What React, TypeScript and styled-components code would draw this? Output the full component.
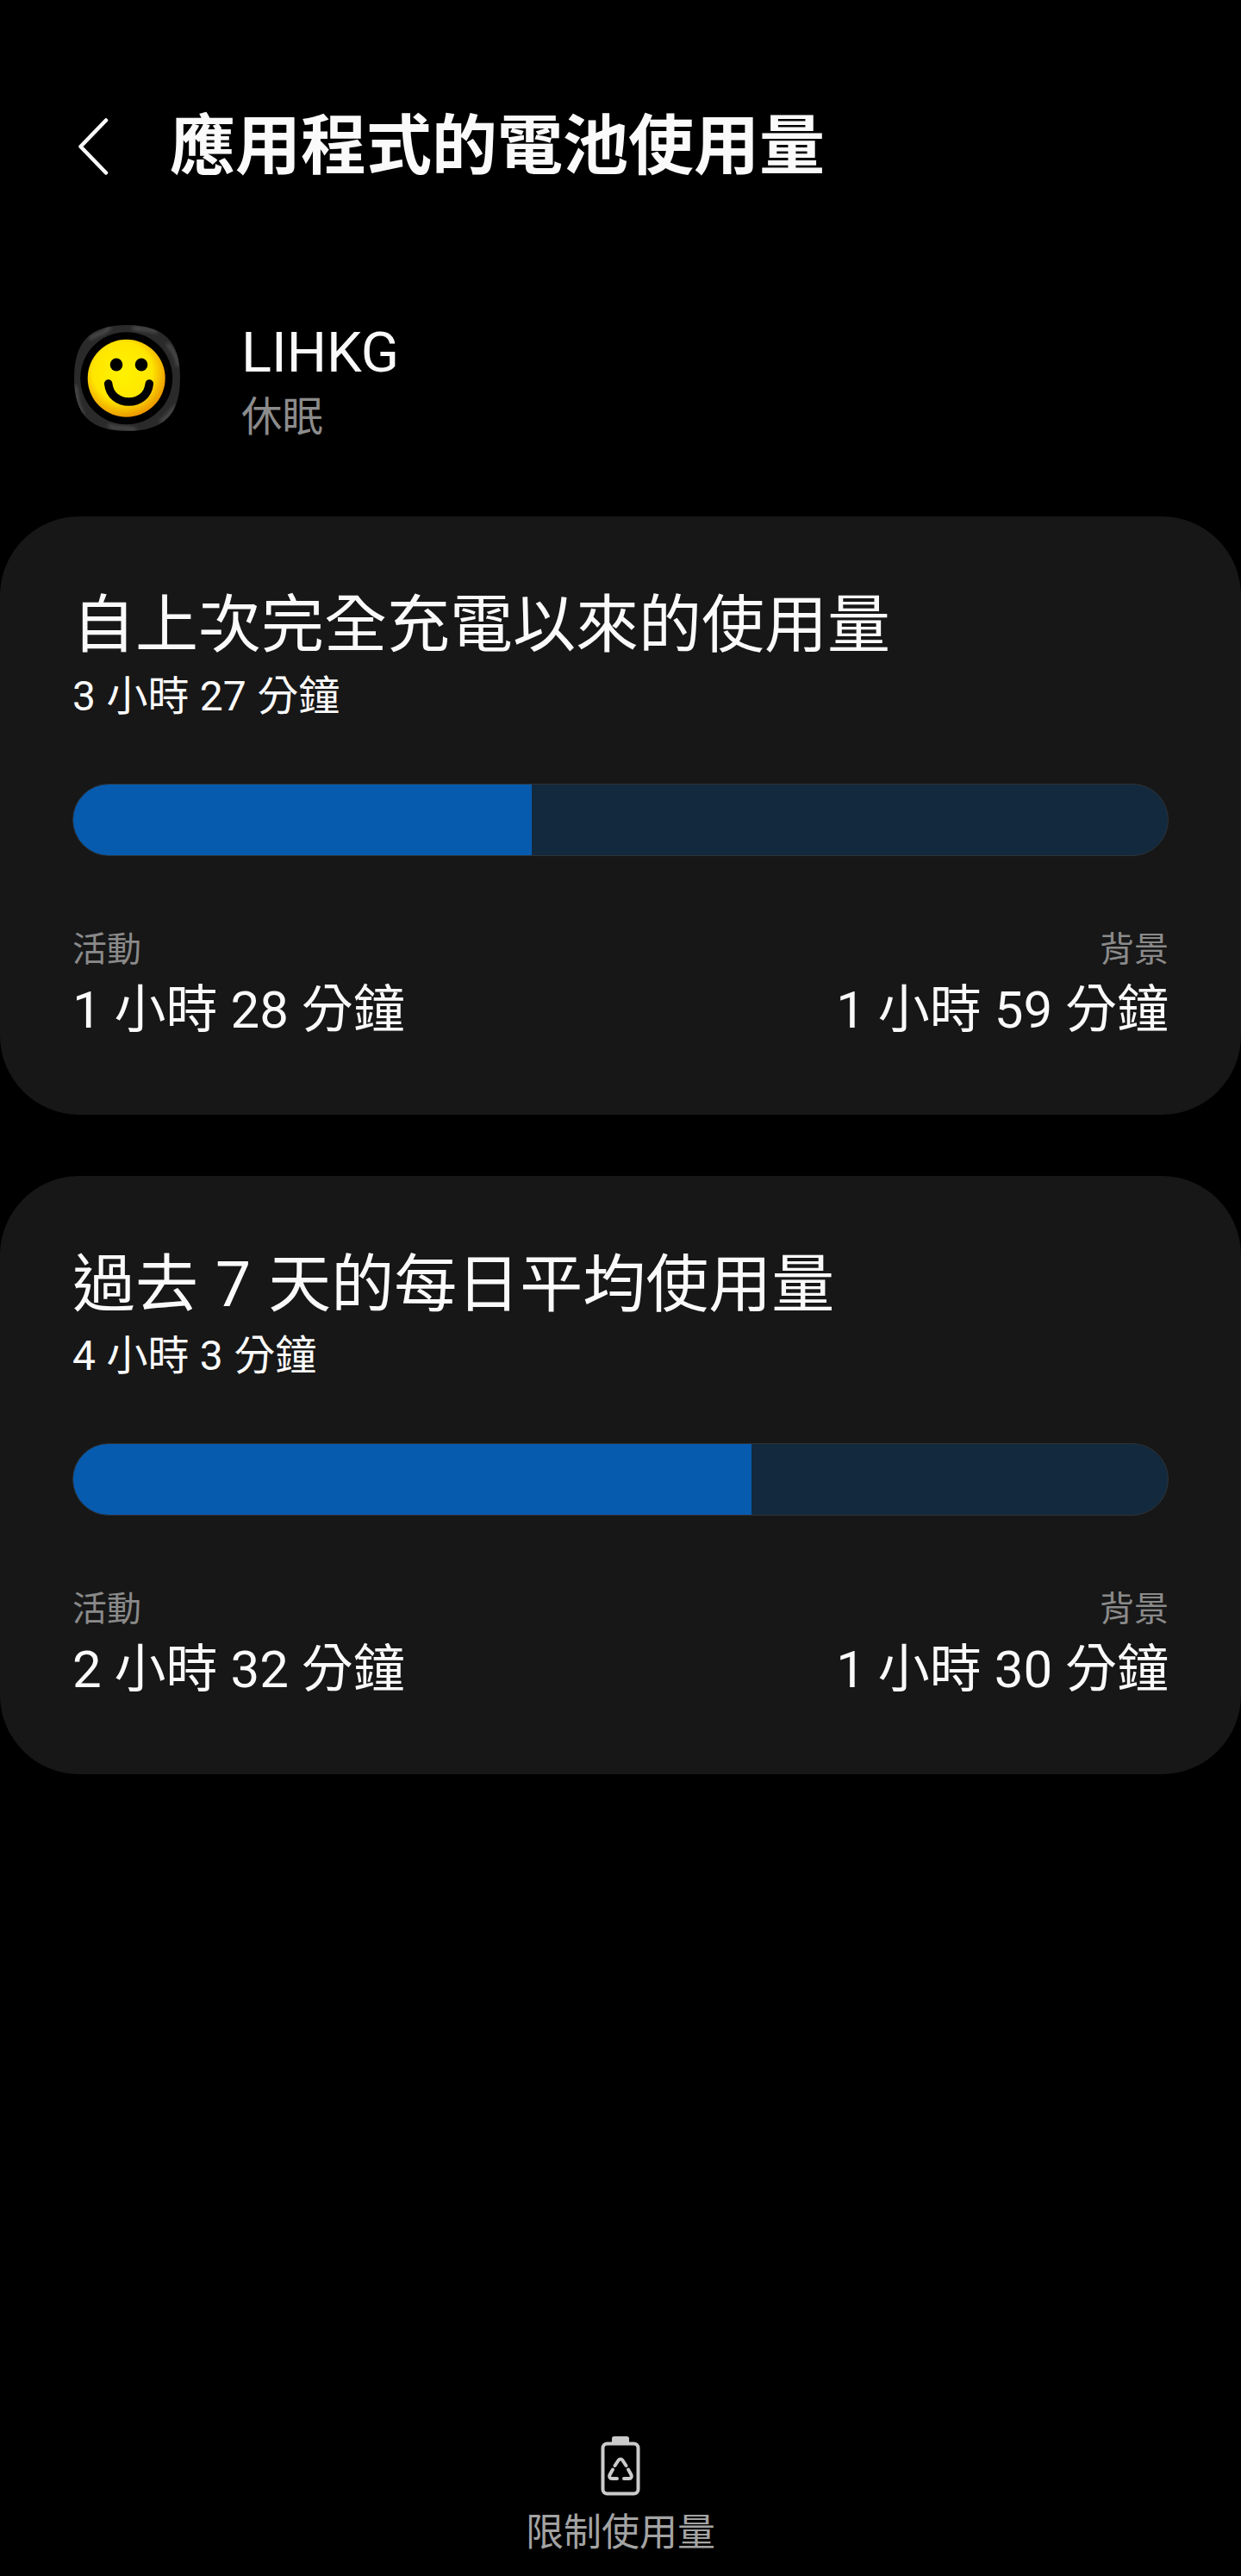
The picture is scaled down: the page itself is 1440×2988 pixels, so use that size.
import React from 'react';
import styled, { createGlobalStyle } from 'styled-components';

const GlobalStyle = createGlobalStyle`
  html, body {
    margin: 0;
    padding: 0;
    background: #000;
  }
  body {
    font-family: Roboto, "Noto Sans CJK TC", sans-serif;
    color: #fafafa;
  }
`;

const usage = [
  {
    title: '自上次完全充電以來的使用量',
    total: '3 小時 27 分鐘',
    fill: 41.9,
    active: '1 小時 28 分鐘',
    background: '1 小時 59 分鐘',
  },
  {
    title: '過去 7 天的每日平均使用量',
    total: '4 小時 3 分鐘',
    fill: 62,
    active: '2 小時 32 分鐘',
    background: '1 小時 30 分鐘',
  },
];

function BackIcon() {
  return (
    <svg width="36" height="66" viewBox="0 0 36 66" fill="none">
      <path d="M33 2.5 L3.5 33 L33 63.5" stroke="#fafafa" strokeWidth="4.5" strokeLinecap="round" strokeLinejoin="round" />
    </svg>
  );
}

function SmileyIcon() {
  return (
    <svg width="123" height="123" viewBox="0 0 123 123">
      <defs>
        <radialGradient id="face" cx="45%" cy="42%" r="62%">
          <stop offset="0%" stopColor="#fff200" />
          <stop offset="62%" stopColor="#ffe600" />
          <stop offset="100%" stopColor="#e88a00" />
        </radialGradient>
        <filter id="soft">
          <feGaussianBlur stdDeviation="2" />
        </filter>
        <clipPath id="shape">
          <path d="M61.5 0 C104 0 123 19 123 61.5 C123 104 104 123 61.5 123 C19 123 0 104 0 61.5 C0 19 19 0 61.5 0 Z" />
        </clipPath>
      </defs>
      <g clipPath="url(#shape)">
        <rect width="123" height="123" fill="#2a2a2a" />
        <g filter="url(#soft)" stroke="#5c5c5c" strokeWidth="3" fill="none">
          <path d="M18 16 C28 8 34 12 42 2" />
          <path d="M68 3 C76 6 84 3 96 8" />
          <path d="M108 22 C114 28 120 36 121 48" />
          <path d="M1 70 C4 82 2 92 10 104" />
          <path d="M40 116 C46 122 60 117 72 122" />
          <path d="M100 112 C106 110 112 100 119 94" />
        </g>
      </g>
      <circle cx="60.7" cy="61.7" r="53.5" fill="#000" />
      <circle cx="60.7" cy="61.7" r="45" fill="url(#face)" />
      <ellipse cx="49" cy="46" rx="7.3" ry="7.5" fill="#000" />
      <ellipse cx="78" cy="46" rx="7.3" ry="7.5" fill="#000" />
      <path d="M39.7 68 C41 82 52 89 63.5 89 C75 89 86 82 87.3 68" fill="none" stroke="#000" strokeWidth="9.5" strokeLinecap="round" />
    </svg>
  );
}

function RestrictIcon() {
  return (
    <svg width="46" height="70" viewBox="0 0 46 70" fill="none">
      <path d="M13 8 V3.5 C13 2 14 1 15.5 1 H30.5 C32 1 33 2 33 3.5 V8 Z" fill="#cbcbcb" />
      <rect x="2.5" y="9.5" width="41" height="58" rx="5" stroke="#cbcbcb" strokeWidth="4" />
      <g stroke="#cbcbcb" strokeWidth="4" strokeLinecap="round" strokeLinejoin="round">
        <path d="M16.5 35 L20.8 28.5 C21.8 27 24.2 27 25.2 28.5 L29.5 35" />
        <path d="M14 39.5 L10.6 45.5 C9.5 47.6 10.6 50 13 50 H19" />
        <path d="M32 39.5 L35.4 45.5 C36.5 47.6 35.4 50 33 50 H27" />
      </g>
    </svg>
  );
}

export default function App(): JSX.Element {
  return (
    <Screen>
      <GlobalStyle />
      <Header>
        <BackButton>
          <BackIcon />
        </BackButton>
        <PageTitle>應用程式的電池使用量</PageTitle>
      </Header>
      <AppRow>
        <AppIcon>
          <SmileyIcon />
        </AppIcon>
        <AppInfo>
          <AppName>LIHKG</AppName>
          <AppStatus>休眠</AppStatus>
        </AppInfo>
      </AppRow>
      <Cards>
        {usage.map((item) => (
          <Card key={item.title}>
            <CardTitle>{item.title}</CardTitle>
            <CardTotal>{item.total}</CardTotal>
            <Bar>
              <BarFill $fill={item.fill} />
            </Bar>
            <Split>
              <Stat>
                <StatLabel>活動</StatLabel>
                <StatValue>{item.active}</StatValue>
              </Stat>
              <Stat $right>
                <StatLabel>背景</StatLabel>
                <StatValue>{item.background}</StatValue>
              </Stat>
            </Split>
          </Card>
        ))}
      </Cards>
      <Footer>
        <RestrictIcon />
        <FooterLabel>限制使用量</FooterLabel>
      </Footer>
    </Screen>
  );
}

const Screen = styled.div`
  display: flex;
  flex-direction: column;
  width: 1440px;
  height: 2988px;
  overflow: hidden;
  background: #000;
`;

const Header = styled.header`
  display: flex;
  align-items: center;
  padding: 124px 0 0 90px;
`;

const BackButton = styled.div`
  display: flex;
  width: 107px;
`;

const PageTitle = styled.h1`
  margin: 0;
  font-size: 76px;
  line-height: 92px;
  font-weight: 700;
`;

const AppRow = styled.div`
  display: flex;
  align-items: center;
  gap: 71px;
  height: 123px;
  margin-top: 161px;
  padding-left: 86px;
`;

const AppIcon = styled.div`
  display: flex;
`;

const AppInfo = styled.div`
  display: flex;
  flex-direction: column;
  gap: 10px;
  padding-top: 10px;
`;

const AppName = styled.div`
  font-size: 65px;
  line-height: 70px;
`;

const AppStatus = styled.div`
  font-size: 47.5px;
  line-height: 60px;
  color: #8c8c8c;
`;

const Cards = styled.main`
  display: flex;
  flex-direction: column;
  gap: 71px;
  margin-top: 99px;
`;

const Card = styled.section`
  display: flex;
  flex-direction: column;
  padding: 82px 84px 86px;
  border-radius: 92px;
  background: #171717;
`;

const CardTitle = styled.h2`
  margin: 0;
  font-size: 73px;
  line-height: 88px;
  font-weight: 400;
  word-spacing: 2px;
`;

const CardTotal = styled.div`
  margin-top: 9px;
  font-size: 48px;
  line-height: 60px;
  word-spacing: 0.5px;
`;

const Bar = styled.div`
  box-sizing: border-box;
  height: 84px;
  margin-top: 71px;
  border: 1px solid #2e3338;
  border-radius: 42px;
  background: #13293d;
  overflow: hidden;
`;

const BarFill = styled.div<{ $fill: number }>`
  width: ${(p) => p.$fill}%;
  height: 100%;
  background: #075bae;
`;

const Split = styled.div`
  display: flex;
  justify-content: space-between;
  margin-top: 84px;
`;

const Stat = styled.div<{ $right?: boolean }>`
  display: flex;
  flex-direction: column;
  gap: 10px;
  text-align: ${(p) => (p.$right ? 'right' : 'left')};
`;

const StatLabel = styled.div`
  font-size: 40px;
  line-height: 50px;
  color: #8a8a8a;
`;

const StatValue = styled.div`
  font-size: 60px;
  line-height: 70px;
`;

const Footer = styled.footer`
  display: flex;
  flex-direction: column;
  align-items: center;
  gap: 15px;
  margin-top: auto;
  padding-bottom: 22px;
`;

const FooterLabel = styled.div`
  font-size: 44px;
  line-height: 56px;
  color: #a3a3a3;
`;
